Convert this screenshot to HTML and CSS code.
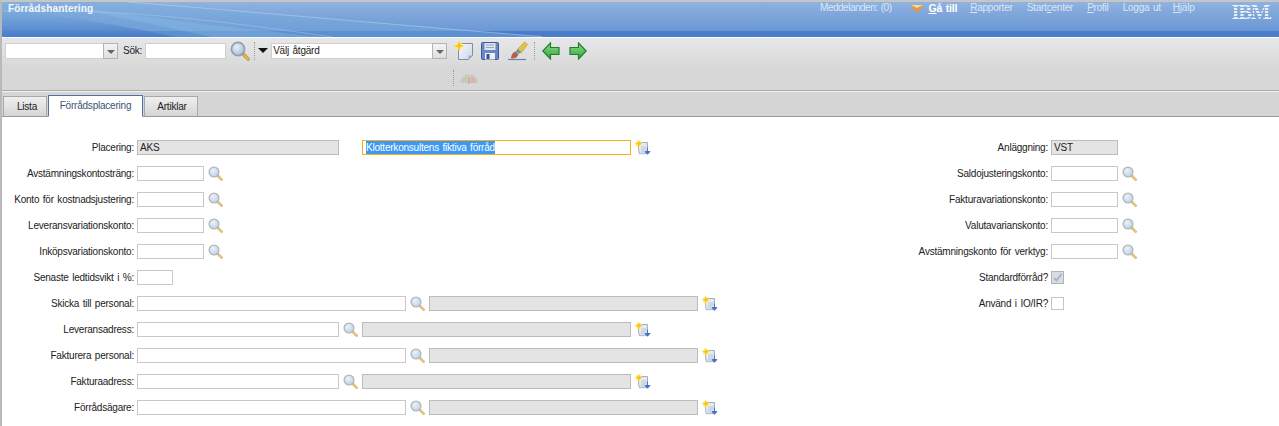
FILE: index.html
```html
<!DOCTYPE html>
<html lang="sv">
<head>
<meta charset="utf-8">
<title>Förrådshantering</title>
<link rel="stylesheet" href="styles.css">
</head>
<body>
<svg class="defs" aria-hidden="true">
  <defs>
    <radialGradient id="glass" cx="40%" cy="35%" r="70%"><stop offset="0" stop-color="#e4eef8"/><stop offset="1" stop-color="#a5c0dc"/></radialGradient>
    <linearGradient id="paper" x1="0" y1="0" x2="1" y2="1"><stop offset="0" stop-color="#f7f9fc"/><stop offset="1" stop-color="#ccd7e6"/></linearGradient>
    <linearGradient id="grn" x1="0" y1="0" x2="0" y2="1"><stop offset="0" stop-color="#8fdc8a"/><stop offset="1" stop-color="#2fa33d"/></linearGradient>
    <linearGradient id="sky" x1="0" y1="0" x2="0" y2="1"><stop offset="0" stop-color="#6c9fd8" stop-opacity="0"/><stop offset="1" stop-color="#4a7cc9"/></linearGradient>
    <symbol id="lookup" viewBox="0 0 15 15">
      <path d="M9.600 9.600l4 4" stroke="#b9924a" stroke-width="2.600" stroke-linecap="round"/>
      <path d="M10.600 10.600l3 3" stroke="#eab94f" stroke-width="1.400" stroke-linecap="round"/>
      <circle cx="6" cy="6" r="4.900" fill="url(#glass)" stroke="#9a9fa6" stroke-width="1.300"/>
    </symbol>
    <symbol id="note" viewBox="0 0 16 16">
      <path d="M3 2.500h9.500v10l-1.500 1.500-1.500-.8-1.500.8-1.500-.8-1.500.8-1-.8z" fill="url(#paper)" stroke="#9aa8ba" stroke-width=".9"/>
      <path d="M6 7h5M6 9h5M6 11h3" stroke="#b4c0d0" stroke-width=".8"/>
      <circle cx="3.800" cy="3.800" r="3.400" fill="#fde98a" opacity=".7"/>
      <path d="M3.800 0l1 2.800 2.800 1-2.800 1-1 2.800-1-2.800L0 3.800l2.800-1z" fill="#fcc50c"/>
      <path d="M12.500 7.500v5M10 11.500h5l-2.500 2.800z" fill="#3f6fc6" stroke="#3f6fc6" stroke-width=".9"/>
    </symbol>
  </defs>
</svg>

<header class="banner">
  <svg class="swoosh" viewBox="0 0 540 35" preserveAspectRatio="none" aria-hidden="true">
    <path d="M0 0h125c130 10 280 24 420 35H0z" fill="#77acdb" opacity=".42"/>
    <path d="M0 8c70 6 130 18 175 27H0z" fill="url(#sky)"/>
    <path d="M40 0c80 12 170 24 280 35H210C150 22 90 10 40 0z" fill="#8cbfe6" opacity=".35"/>
    <path d="M125 0c130 10 280 24 420 35" stroke="#c5dcf1" stroke-width=".8" fill="none" opacity=".6"/>
    <path d="M0 9c120-3 220 10 330 26" stroke="#b4d4ee" stroke-width=".8" fill="none" opacity=".5"/>
  </svg>
  <div class="app-title">Förrådshantering</div>
  <nav class="topnav">
    <span class="msgs">Meddelanden: (0)</span>
    <span class="goto"><svg class="goto-arrow" viewBox="0 0 14 8" aria-hidden="true"><path d="M0 0h14L7 8z" fill="#e79a3a"/><path d="M1 0h12L7 3z" fill="#f5d9a0"/></svg><b><u>G</u>å till</b></span>
    <span class="nav-rapporter"><u>R</u>apporter</span>
    <span>Start<u>c</u>enter</span>
    <span><u>P</u>rofil</span>
    <span>Logga ut</span>
    <span class="nav-hjalp"><u>H</u>jälp</span>
    <span class="ibm">IBM<small>.</small></span>
  </nav>
</header>

<div class="toolbar">
  <div class="combo combo-a"><input class="combo-input" type="text"><span class="combo-btn"></span></div>
  <label class="search-label">Sök:</label>
  <input class="search-input" type="text">
  <svg class="tool tool-search" viewBox="0 0 15 15" aria-hidden="true"><use href="#lookup"/></svg>
  <span class="sep"></span>
  <span class="down-arrow"></span>
  <div class="combo combo-b"><input class="combo-input" type="text" value="Välj åtgärd"><span class="combo-btn"></span></div>
  <svg class="tool tool-new" viewBox="0 0 20 20" aria-hidden="true">
    <path d="M4.500 2.500h14v12l-4 4h-10z" fill="url(#paper)" stroke="#7d8ea8"/>
    <path d="M14.500 18.500v-4h4z" fill="#9fb0c6"/>
    <circle cx="5" cy="5" r="4.200" fill="#fde98a" opacity=".7"/>
    <path d="M5 0l1.300 3.700L10 5 6.300 6.300 5 10 3.700 6.300 0 5l3.700-1.300z" fill="#fcc50c"/>
  </svg>
  <svg class="tool tool-save" viewBox="0 0 18 18" aria-hidden="true">
    <rect x=".5" y=".5" width="17" height="17" rx="1" fill="#6a86c4" stroke="#3f5a9c"/>
    <rect x="3.500" y="1" width="11" height="7" fill="#dfe3ec"/>
    <path d="M5 3h8M5 5.500h8" stroke="#9aa6bd"/>
    <rect x="4" y="11" width="10" height="6.500" fill="#eef0f5"/>
    <rect x="5.500" y="12" width="3" height="5" fill="#34508f"/>
  </svg>
  <svg class="tool tool-brush" viewBox="0 0 20 20" aria-hidden="true">
    <path d="M0 18.500h18" stroke="#6f7fb0" stroke-width="1.200"/>
    <path d="M9 9L16.500 1l3 2.500-6.500 8.500z" fill="#e8c23c" stroke="#b2922a" stroke-width=".6"/>
    <path d="M7.500 10.500L10 8l3 3-2 2z" fill="#5f9fa6"/>
    <path d="M3 17.500c0-3 1.500-6 4.500-7l3 3c-1 2.500-3.500 4.500-7.500 4z" fill="#b2604a"/>
  </svg>
  <span class="sep sep-b"></span>
  <svg class="tool tool-arrow" viewBox="0 0 18 18" aria-hidden="true"><path d="M8.500 1L.8 9l7.700 8v-4.500h8.500v-7H8.500z" fill="url(#grn)" stroke="#1f7f2d" stroke-width="1.200"/></svg>
  <svg class="tool tool-arrow tool-fwd" viewBox="0 0 18 18" aria-hidden="true"><path d="M9.500 1l7.700 8-7.700 8v-4.500H1v-7h8.500z" fill="url(#grn)" stroke="#1f7f2d" stroke-width="1.200"/></svg>
</div>

<div class="toolbar2">
  <span class="sep"></span>
  <svg class="gauge" viewBox="0 0 18 12" aria-hidden="true">
    <path d="M0 11a9 9 0 0 1 18 0z" fill="#c9c6bd"/>
    <path d="M1.500 11a7.500 7.500 0 0 1 5-7L8 11z" fill="#b8c8a8"/>
    <path d="M11 4a7.500 7.500 0 0 1 5.500 7H10z" fill="#d9a898"/>
    <path d="M8 4h3l-1 7H9z" fill="#ddd3a8"/>
    <path d="M9 5v7" stroke="#8a8a8a"/>
  </svg>
</div>

<div class="tabbar">
  <a class="tab tab-lista">Lista</a>
  <a class="tab tab-active">Förrådsplacering</a>
  <a class="tab tab-artiklar">Artiklar</a>
</div>

<main class="form">
  <section class="col-left">
    <div class="row"><label class="lbl">Placering:</label><input class="fld w202 ro" type="text" value="AKS" readonly><span class="spacer"></span><div class="fld w269 focus"><span class="selected">Klotterkonsultens fiktiva förråd</span></div><svg class="note"><use href="#note"/></svg></div>
    <div class="row"><label class="lbl">Avstämningskontosträng:</label><input class="fld w67" type="text"><svg class="lookup"><use href="#lookup"/></svg></div>
    <div class="row"><label class="lbl">Konto för kostnadsjustering:</label><input class="fld w67" type="text"><svg class="lookup"><use href="#lookup"/></svg></div>
    <div class="row"><label class="lbl">Leveransvariationskonto:</label><input class="fld w67" type="text"><svg class="lookup"><use href="#lookup"/></svg></div>
    <div class="row"><label class="lbl">Inköpsvariationskonto:</label><input class="fld w67" type="text"><svg class="lookup"><use href="#lookup"/></svg></div>
    <div class="row"><label class="lbl">Senaste ledtidsvikt i %:</label><input class="fld w36" type="text"></div>
    <div class="row"><label class="lbl">Skicka till personal:</label><input class="fld w269" type="text"><svg class="lookup"><use href="#lookup"/></svg><input class="fld w269 ro" type="text" readonly><svg class="note"><use href="#note"/></svg></div>
    <div class="row"><label class="lbl">Leveransadress:</label><input class="fld w202" type="text"><svg class="lookup"><use href="#lookup"/></svg><input class="fld w269 ro" type="text" readonly><svg class="note"><use href="#note"/></svg></div>
    <div class="row"><label class="lbl">Fakturera personal:</label><input class="fld w269" type="text"><svg class="lookup"><use href="#lookup"/></svg><input class="fld w269 ro" type="text" readonly><svg class="note"><use href="#note"/></svg></div>
    <div class="row"><label class="lbl">Fakturaadress:</label><input class="fld w202" type="text"><svg class="lookup"><use href="#lookup"/></svg><input class="fld w269 ro" type="text" readonly><svg class="note"><use href="#note"/></svg></div>
    <div class="row"><label class="lbl">Förrådsägare:</label><input class="fld w269" type="text"><svg class="lookup"><use href="#lookup"/></svg><input class="fld w269 ro" type="text" readonly><svg class="note"><use href="#note"/></svg></div>
  </section>
  <section class="col-right">
    <div class="row"><label class="lbl">Anläggning:</label><input class="fld w67 ro" type="text" value="VST" readonly></div>
    <div class="row"><label class="lbl">Saldojusteringskonto:</label><input class="fld w67" type="text"><svg class="lookup"><use href="#lookup"/></svg></div>
    <div class="row"><label class="lbl">Fakturavariationskonto:</label><input class="fld w67" type="text"><svg class="lookup"><use href="#lookup"/></svg></div>
    <div class="row"><label class="lbl">Valutavarianskonto:</label><input class="fld w67" type="text"><svg class="lookup"><use href="#lookup"/></svg></div>
    <div class="row"><label class="lbl">Avstämningskonto för verktyg:</label><input class="fld w67" type="text"><svg class="lookup"><use href="#lookup"/></svg></div>
    <div class="row"><label class="lbl">Standardförråd?</label><span class="check check-on"><svg viewBox="0 0 11 11" class="tick" aria-hidden="true"><path d="M2 6l2.500 2.500L9.500 2" fill="none" stroke="#8fb0dc" stroke-width="1.600"/></svg></span></div>
    <div class="row"><label class="lbl">Använd i IO/IR?</label><span class="check"></span></div>
  </section>
</main>
</body>
</html>
```

FILE: styles.css
```css
* { box-sizing: border-box; }
html, body { margin: 0; padding: 0; }
body {
  height: 426px;
  overflow: hidden;
  background: #fff;
  border-left: 2px solid #b9b9b9;
  border-top: 2px solid #c6c6c6;
  font-family: "Liberation Sans", Arial, sans-serif;
  font-size: 10px;
  letter-spacing: -.22px;
  word-spacing: 1px;
  color: #222;
}
.defs { position: absolute; width: 0; height: 0; }

/* banner */
.banner {
  position: relative;
  display: flex;
  height: 35px;
  background: linear-gradient(#8fb2df 0, #6a97d5 29px, #4a7cc9 29px, #4a7cc9 35px);
}
.swoosh { position: absolute; left: 0; top: 0; width: 540px; height: 35px; }
.app-title { position: relative; padding: 1px 0 0 6px; font-weight: bold; font-size: 10px; letter-spacing: .15px; color: #f2f6fb; }
.topnav {
  position: relative;
  display: flex;
  margin-left: auto;
  align-items: flex-start;
  gap: 14px;
  padding: 0 4px 0 0;
  color: #dbe6f5;
}
.topnav span { white-space: nowrap; }
.topnav .msgs { letter-spacing: -.5px; }
.topnav .goto { display: flex; align-items: center; margin-left: 5px; color: #fff; font-size: 10.5px; }
.goto-arrow { width: 14px; height: 8px; margin: 2px 4px 0 0; }
.topnav .nav-rapporter { margin-left: -1px; }
.topnav .nav-hjalp { margin-left: -2px; }
.topnav .ibm {
  flex: none;
  margin: 0 0 0 23px;
  padding: 0 3px 0 0;
  font-family: "Liberation Serif", serif;
  font-weight: bold;
  font-size: 21px;
  line-height: 20px;
  letter-spacing: -1.5px;
  word-spacing: 0;
  color: transparent;
  background: repeating-linear-gradient(#eaf0f8 0 2px, transparent 2px 3px);
  -webkit-background-clip: text;
  background-clip: text;
}
.ibm small { font-size: 12px; letter-spacing: 0; }

/* toolbars */
.toolbar {
  display: flex;
  align-items: center;
  height: 27px;
  margin-top: 1px;
  padding: 0 0 2px 3px;
  background: linear-gradient(#e6e7e9, #dadada);
}
.combo { display: flex; height: 16px; background: #fff; border: 1px solid #cfcfcf; }
.combo-a { width: 113px; }
.combo-b { width: 176px; }
.combo-input { flex: 1; min-width: 0; border: 0; padding: 0 0 0 1px; font: inherit; letter-spacing: inherit; word-spacing: inherit; color: #222; background: transparent; outline: 0; }
.combo-btn {
  width: 15px;
  margin: -1px -1px -1px 0;
  border: 1px solid #b4b4b4;
  background: linear-gradient(#f4f4f4, #dedede);
  position: relative;
}
.combo-btn::after {
  content: "";
  position: absolute;
  left: 3px;
  top: 6px;
  border: 4px solid transparent;
  border-top-color: #666;
  border-bottom: 0;
}
.search-label { margin-left: 5px; }
.search-input { width: 81px; height: 16px; margin-left: 3px; border: 1px solid #cfcfcf; background: #fff; }
.tool { flex: none; }
.tool-search { width: 20px; height: 20px; margin-left: 4px; }
.sep { width: 0; height: 18px; border-left: 1px dotted #9c9c9c; }
.toolbar .sep { margin-left: 4px; }
.down-arrow { width: 0; margin-left: 3px; border: 5px solid transparent; border-top: 5px solid #111; border-bottom: 0; }
.combo-b { margin-left: 3px; }
.tool-new { width: 20px; height: 20px; margin-left: 7px; }
.tool-save { width: 18px; height: 18px; margin-left: 7px; }
.tool-brush { width: 20px; height: 20px; margin-left: 9px; }
.toolbar .sep-b { margin-left: 6px; }
.tool-arrow { width: 18px; height: 18px; margin-left: 7px; }
.tool-fwd { margin-left: 9px; }
.toolbar2 {
  display: flex;
  align-items: center;
  height: 26px;
  padding-left: 451px;
  background: #d7d7d7;
  border-bottom: 1px solid #a9a9a9;
}
.toolbar2 .sep { height: 16px; }
.gauge { width: 18px; height: 12px; margin-left: 6px; opacity: .7; }

/* tabs */
.tabbar {
  display: flex;
  align-items: flex-end;
  height: 26px;
  padding: 0 0 0 1px;
  border-top: 1px solid #f2f2f2;
  border-bottom: 1px solid #999;
  background: #d5d5d5;
}
.tab {
  width: 44px;
  height: 21px;
  margin-bottom: -1px;
  margin-right: 1px;
  border: 1px solid #a8a8a8;
  border-bottom: 1px solid #999;
  background: linear-gradient(#f0f0f0, #d4d4d4);
  text-align: center;
  line-height: 20px;
}
.tab-lista { padding-left: 4px; }
.tab-active {
  width: 95px;
  height: 22px;
  position: relative;
  border-color: #4a73a8;
  border-bottom: 1px solid #fff;
  background: #fff;
  color: #3a5570;
}
.tab-artiklar { width: 54px; padding-left: 2px; }

/* form */
.form { display: flex; padding-top: 23px; }
.col-left { width: 898px; }
.col-right { width: 300px; }
.row { display: flex; align-items: flex-start; height: 26px; }
.lbl { flex: none; width: 132px; margin-right: 3px; text-align: right; line-height: 15px; white-space: nowrap; }
.col-right .lbl { width: 148px; }
.fld {
  flex: none;
  height: 15px;
  padding: 0 2px;
  border: 1px solid #c8c8c8;
  background: #fff;
  font: inherit;
  letter-spacing: inherit;
  word-spacing: inherit;
  color: #222;
  outline: 0;
  line-height: 12px;
}
.w36 { width: 36px; }
.w67 { width: 67px; }
.w202 { width: 202px; }
.w269 { width: 269px; }
.ro { background: #e4e4e4; border-color: #bcbcbc; }
.focus { border-color: #f6b013; padding: 0 3px; }
.selected { display: inline-block; background: #3d97f4; color: #fff; height: 13px; line-height: 13px; }
.spacer { flex: none; width: 23px; }
.lookup { flex: none; width: 15px; height: 15px; margin: 0 4px; opacity: .75; }
.note { flex: none; width: 16px; height: 16px; margin-left: 4px; }
.check {
  display: block;
  width: 13px;
  height: 13px;
  margin-top: 1px;
  border: 1px solid #c4c4c4;
  background: #fff;
}
.check-on { background: #dcdcdc; border-color: #b4b4b4; }
.tick { display: block; width: 11px; height: 11px; }
```
